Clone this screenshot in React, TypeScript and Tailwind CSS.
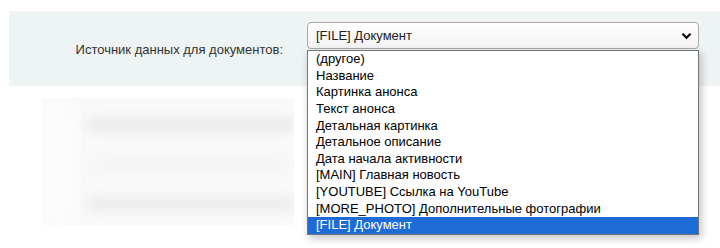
import React from "react";

const options = [
  "(другое)",
  "Название",
  "Картинка анонса",
  "Текст анонса",
  "Детальная картинка",
  "Детальное описание",
  "Дата начала активности",
  "[MAIN] Главная новость",
  "[YOUTUBE] Ссылка на YouTube",
  "[MORE_PHOTO] Дополнительные фотографии",
  "[FILE] Документ",
];

function Chevron() {
  return (
    <svg width="11" height="8" viewBox="0 0 11 8" className="text-black">
      <path d="M1.5 1.8 L5.5 5.8 L9.5 1.8" fill="none" stroke="currentColor" strokeWidth="2.2" />
    </svg>
  );
}

export default function App() {
  const selected = "[FILE] Документ";

  return (
    <div className="w-[720px] h-[248px] bg-white overflow-hidden font-['Liberation_Sans',Arial,sans-serif] text-[13px]">
      <div className="pt-[11px] pl-[9px]">
        <div className="flex h-[75px] bg-[#eef3f3]">
          <div className="w-[285px] shrink-0 flex items-center justify-end pr-[11px] text-[#333] pt-[2px]">
            Источник данных для документов:
          </div>
          <div className="relative pl-[13px] pt-[11px]">
            <div className="w-[392px] h-[27px] flex items-center justify-between pl-[8px] pr-[6px] rounded-[4px] border border-[#a9a9a9] bg-gradient-to-b from-white to-[#f3f3f3] text-[#222]">
              <span>{selected}</span>
              <Chevron />
            </div>
            {/* open dropdown list */}
            <div className="absolute left-[13px] top-[39px] w-[392px] border border-[#767676] bg-white shadow-[2px_3px_8px_rgba(0,0,0,0.25)] z-10">
              {options.map((opt) => (
                <div
                  key={opt}
                  className={`h-[16.64px] leading-[16.64px] pl-[8px] whitespace-nowrap ${
                    opt === selected ? "bg-[#1f6bd6] text-white" : "text-black"
                  }`}
                >
                  {opt}
                </div>
              ))}
            </div>
          </div>
        </div>
      </div>

      {/* blurred placeholder */}
      <div className="ml-[43px] mt-[12px] w-[251px] h-[127px] bg-[#f9f9f9] overflow-hidden flex">
        <div className="w-[30px] shrink-0 bg-[#fcfcfc] blur-[8px]" />
        <div className="flex-1 flex flex-col justify-between pt-[22px] pb-[16px] pl-[15px] pr-[0px]">
          <div className="h-[10px] bg-[#e5e5e5] blur-[6px]" />
          <div className="h-[8px] mx-[5px] bg-[#f2f2f2] blur-[6px]" />
          <div className="h-[10px] bg-[#e7e7e7] blur-[6px]" />
        </div>
      </div>
    </div>
  );
}
